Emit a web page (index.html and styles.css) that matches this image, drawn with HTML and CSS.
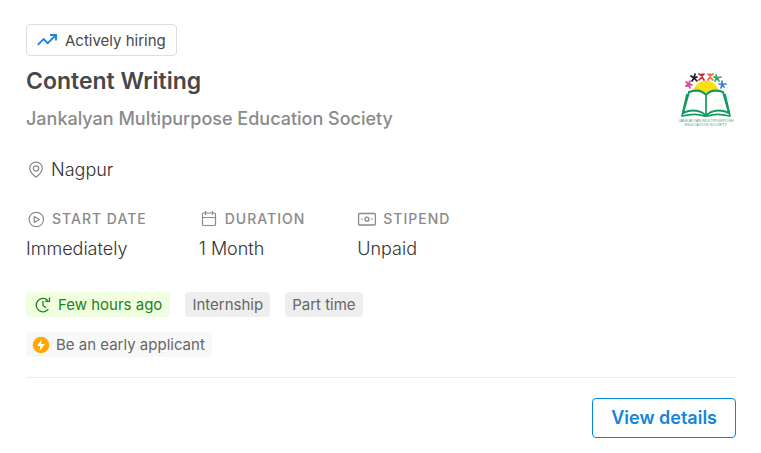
FILE: index.html
```html
<!DOCTYPE html>
<html lang="en">
<head>
<meta charset="utf-8">
<meta name="viewport" content="width=device-width, initial-scale=1">
<title>Content Writing</title>
<link rel="stylesheet" href="styles.css">
</head>
<body>
<article class="card">
  <div class="badge">
    <svg class="badge-icon" width="20" height="20" viewBox="0 0 20 20" fill="none" stroke="currentColor" stroke-width="1.9" aria-hidden="true"><path d="M.8 14.800 6.600 9l4.100 4.100 7.800-7.600M13 5h6v5.500"/></svg>
    Actively hiring
  </div>
  <header class="heading">
    <div class="heading-text">
      <h1 class="title">Content Writing</h1>
      <p class="company">Jankalyan Multipurpose Education Society</p>
    </div>
    <svg class="logo" width="60" height="60" viewBox="0 0 60 60" role="img" aria-label="Jankalyan Multipurpose Education Society">
      <path d="M17 22C20 7 40 7 43 22L30 27Z" fill="#fbdf10"/>
      <g fill="none" stroke-width="1.700" stroke-linecap="round">
        <path stroke="#e0409a" d="m10 12 3 2 1-3m-4 5 3-2 3 1m-3-1 1 4m-4-2h3"/>
        <path stroke="#241914" d="m15 6 3 2 1-4m-1 4-2 3m2-3 3 3m-3-3 3-1"/>
        <path stroke="#d4232a" d="m23 4 3 2 2-2m-2 0v4m-3 2 3-3 2 3"/>
        <path stroke="#ef6a30" d="m32 4 2 2 3-2m-3 0v4m-2 2 2-3 3 3"/>
        <path stroke="#2ba562" d="m40 5 1 3 4-1m-4 1-2 3m-1-4 3 1 2 3"/>
        <path stroke="#3d80d0" d="m46 11 0 3 4 0m-4 0-1 4m-2-4h3l2 3"/>
      </g>
      <path d="M13 22C19 20 26 20 30 25 34 20 41 20 47 22L53 43C44 39 35 40 30 46 25 40 16 39 7 43Z" fill="#fff" stroke="#129a60" stroke-width="2" stroke-linejoin="round"/>
      <path d="M30 25v20M11 24 6 46c9-2 17-2 22 0h4c5-2 13-2 22 0l-5-22" fill="none" stroke="#129a60" stroke-width="1.700" stroke-linejoin="round"/>
      <text class="logo-text" x="30" y="52">JANKALYAN MULTIPURPOSE</text>
      <text class="logo-text" x="30" y="56">EDUCATION SOCIETY</text>
    </svg>
  </header>
  <p class="location">
    <svg class="icon" width="20" height="20" viewBox="0 0 20 20" fill="none" stroke="currentColor" stroke-width="1.200" aria-hidden="true"><path d="M10 17.200C7.500 15.200 3.700 11.800 3.700 8.400a6.300 6.300 0 0 1 12.600 0c0 3.400-3.800 6.800-6.300 8.800Z"/><circle cx="10" cy="8.500" r="2.700"/></svg>
    Nagpur
  </p>
  <dl class="details">
    <div class="detail">
      <dt class="label">
        <svg class="icon" width="20" height="20" viewBox="0 0 20 20" fill="none" stroke="currentColor" stroke-width="1.200" stroke-linejoin="round" aria-hidden="true"><circle cx="10.300" cy="10.500" r="7.200"/><path d="M8.300 7.500v6l5-3Z"/></svg>
        START DATE
      </dt>
      <dd class="value">Immediately</dd>
    </div>
    <div class="detail">
      <dt class="label">
        <svg class="icon" width="20" height="20" viewBox="0 0 20 20" fill="none" stroke="currentColor" stroke-width="1.200" aria-hidden="true"><rect x="3.500" y="4" width="13" height="12.500" rx="1"/><path d="M3.500 8.500h13M6.500 2v4M13.500 2v4"/></svg>
        DURATION
      </dt>
      <dd class="value">1 Month</dd>
    </div>
    <div class="detail">
      <dt class="label">
        <svg class="icon" width="20" height="20" viewBox="0 0 20 20" fill="none" stroke="currentColor" stroke-width="1.300" aria-hidden="true"><rect x="1.600" y="4.500" width="16.800" height="11.500" rx="1"/><circle cx="10" cy="10.200" r="2"/><path d="M4.200 10.200h1.500M14.300 10.200h1.500"/></svg>
        STIPEND
      </dt>
      <dd class="value">Unpaid</dd>
    </div>
  </dl>
  <ul class="tags">
    <li class="tag tag-fresh">
      <svg class="tag-icon" width="18" height="18" viewBox="0 0 18 18" fill="none" stroke="currentColor" stroke-width="1.300" aria-hidden="true"><path d="M13.800 4.500A6.700 6.700 0 1 0 14.300 13.200M11 5.300h4.500V1.500M9 5v4.500l3 2.300"/></svg>
      Few hours ago
    </li>
    <li class="tag">Internship</li>
    <li class="tag">Part time</li>
  </ul>
  <div class="tag tag-early">
    <svg class="tag-icon" width="18" height="18" viewBox="0 0 18 18" aria-hidden="true"><circle cx="9" cy="9" r="8.300" fill="#ffa900"/><path d="M9.800 3 5 10h3.400l-.8 5L12.800 8H9.200Z" fill="#fff"/></svg>
    Be an early applicant
  </div>
  <footer class="actions">
    <a class="button" href="#details">View details</a>
  </footer>
</article>
</body>
</html>
```
FILE: styles.css
```css
* {
  box-sizing: border-box;
}

body {
  margin: 0;
  background: #fff;
  color: #333;
  font-family: Inter, "Liberation Sans", sans-serif;
}

h1, p, dl, dd, ul {
  margin: 0;
  padding: 0;
}

.card {
  padding: 24px 25px 16px 26px;
}

.badge {
  display: flex;
  align-items: center;
  gap: 8px;
  width: max-content;
  height: 32px;
  padding: 0 10px;
  border: 1px solid #ddd;
  border-radius: 4px;
  font-size: 15px;
  color: #484848;
}

.badge-icon {
  color: #1c86e0;
}

.heading {
  display: flex;
  justify-content: space-between;
  align-items: flex-start;
  margin-top: 10px;
}

.title {
  font-size: 23px;
  line-height: 30px;
  font-weight: 600;
  color: #484848;
}

.company {
  margin-top: 10px;
  font-size: 18px;
  line-height: 26px;
  font-weight: 500;
  color: #8a8a8a;
}

.logo {
  flex: none;
  margin-top: 4px;
}

.logo-text {
  font-family: "Liberation Sans", sans-serif;
  font-size: 4px;
  text-anchor: middle;
  fill: #4ba983;
}

.icon {
  flex: none;
  color: #8a8a8a;
}

.location {
  display: flex;
  align-items: center;
  gap: 5px;
  margin-top: 26px;
  font-size: 18px;
  font-weight: 300;
  line-height: 24px;
}

.details {
  display: flex;
  gap: 52px;
  margin-top: 26px;
}

.label {
  display: flex;
  align-items: center;
  gap: 6px;
  font-size: 14px;
  line-height: 22px;
  font-weight: 500;
  letter-spacing: 1px;
  color: #8a8a8a;
}

.value {
  margin-top: 6px;
  font-size: 18px;
  font-weight: 300;
  line-height: 26px;
}

.tags {
  display: flex;
  gap: 15px;
  margin-top: 30px;
  list-style: none;
}

.tag {
  display: flex;
  align-items: center;
  gap: 6px;
  width: max-content;
  height: 25px;
  padding: 0 7px;
  border-radius: 4px;
  background: #eee;
  font-size: 15px;
  color: #666;
}

.tag-fresh {
  padding: 0 8px;
  background: #f0ffe0;
  color: #25801b;
}

.tag-early {
  margin-top: 15px;
  padding-left: 6px;
  background: #f8f8f8;
}

.actions {
  display: flex;
  justify-content: flex-end;
  margin-top: 20px;
  padding-top: 20px;
  border-top: 1px solid #eee;
}

.button {
  padding: 7px 18px;
  border: 1px solid #008bdc;
  border-radius: 4px;
  font-size: 18px;
  line-height: 24px;
  font-weight: 600;
  color: #1484dc;
  text-decoration: none;
}
```
